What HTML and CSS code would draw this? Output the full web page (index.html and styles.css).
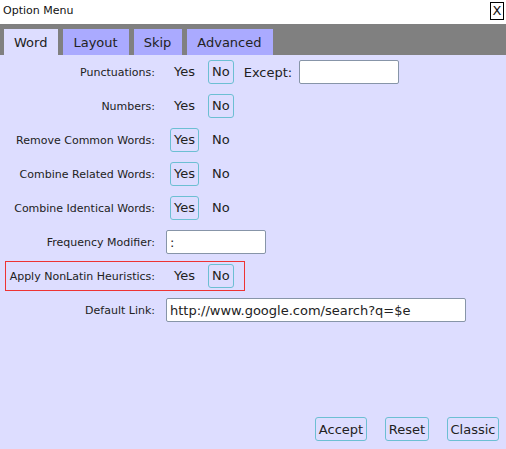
FILE: index.html
```html
<!DOCTYPE html>
<html>
<head>
<meta charset="utf-8">
<link rel="stylesheet" href="styles.css">
</head>
<body>
<div class="window">
  <div class="titlebar">
    <span class="title">Option Menu</span>
    <button class="close">X</button>
  </div>
  <div class="tabbar">
    <div class="tab active">Word</div>
    <div class="tab">Layout</div>
    <div class="tab">Skip</div>
    <div class="tab">Advanced</div>
  </div>
  <div class="content">
    <div class="form">
      <div class="row">
        <span class="label">Punctuations:</span>
        <div class="toggles">
          <span class="opt">Yes</span>
          <span class="opt sel">No</span>
        </div>
        <span class="extra">Except:</span>
        <input class="field short" type="text" value="">
      </div>
      <div class="row">
        <span class="label">Numbers:</span>
        <div class="toggles">
          <span class="opt">Yes</span>
          <span class="opt sel">No</span>
        </div>
      </div>
      <div class="row">
        <span class="label">Remove Common Words:</span>
        <div class="toggles">
          <span class="opt sel">Yes</span>
          <span class="opt">No</span>
        </div>
      </div>
      <div class="row">
        <span class="label">Combine Related Words:</span>
        <div class="toggles">
          <span class="opt sel">Yes</span>
          <span class="opt">No</span>
        </div>
      </div>
      <div class="row">
        <span class="label">Combine Identical Words:</span>
        <div class="toggles">
          <span class="opt sel">Yes</span>
          <span class="opt">No</span>
        </div>
      </div>
      <div class="row">
        <span class="label">Frequency Modifier:</span>
        <input class="field short" type="text" value=":">
      </div>
      <div class="row highlight">
        <span class="label">Apply NonLatin Heuristics:</span>
        <div class="toggles">
          <span class="opt">Yes</span>
          <span class="opt sel">No</span>
        </div>
      </div>
      <div class="row">
        <span class="label">Default Link:</span>
        <input class="field long" type="text" value="http://www.google.com/search?q=$e">
      </div>
    </div>
    <div class="actions">
      <button class="btn btn-accept">Accept</button>
      <button class="btn btn-reset">Reset</button>
      <button class="btn btn-classic">Classic</button>
    </div>
  </div>
</div>
</body>
</html>
```

FILE: styles.css
```css
html, body {
  margin: 0;
  padding: 0;
}

body {
  font-family: "DejaVu Sans", Verdana, sans-serif;
  color: #222;
  background: #ffffff;
}

.window {
  display: flex;
  flex-direction: column;
  height: 449px;
  width: 506px;
}

.titlebar {
  height: 24px;
  display: flex;
  justify-content: space-between;
  align-items: flex-start;
  padding: 0 2px 0 3px;
  box-sizing: border-box;
  background: #fff;
}

.title {
  font-size: 11px;
  line-height: 22px;
  color: #111;
}

.close {
  margin: 2px 0 0 0;
  width: 14px;
  height: 18px;
  padding: 0;
  border: 1px solid #000;
  background: #fff;
  font-family: inherit;
  font-size: 13px;
  line-height: 16px;
  color: #111;
}

.tabbar {
  height: 31px;
  background: #808080;
  display: flex;
  align-items: flex-end;
  gap: 5px;
  padding-left: 4px;
}

.tab {
  height: 26px;
  line-height: 27px;
  padding: 0 11px 0 10px;
  background: #aaaaff;
  font-size: 13px;
  color: #222;
}

.tab.active {
  background: #ddddff;
}

.content {
  flex: 1;
  background: #ddddff;
  display: flex;
  flex-direction: column;
  justify-content: space-between;
  padding: 5px 7px 8px 8px;
}

.form {
  display: flex;
  flex-direction: column;
  align-items: flex-start;
  gap: 10px;
}

.row {
  display: flex;
  align-items: center;
  height: 24px;
}

.row.highlight {
  border: 1px solid #ee3333;
  margin: -3px 0 -3px -3px;
  padding: 2px 10px 2px 2px;
}

.label {
  width: 147px;
  text-align: right;
  font-size: 11px;
  margin-right: 11px;
  white-space: nowrap;
}

.toggles {
  display: flex;
  gap: 9px;
  margin-left: 4px;
}

.opt {
  height: 24px;
  box-sizing: border-box;
  line-height: 22px;
  padding: 0 3px;
  border: 1px solid transparent;
  border-radius: 3px;
  font-size: 13px;
}

.opt.sel {
  border-color: #6cbfd3;
}

.extra {
  font-size: 13px;
  margin-left: 10px;
  margin-right: 7px;
}

.field {
  height: 24px;
  box-sizing: border-box;
  border: 1px solid #8795a8;
  border-radius: 2px;
  background: #fff;
  font-family: inherit;
  font-size: 13px;
  color: #222;
  padding: 0 3px;
  margin: 0;
}

.short {
  width: 100px;
}

.long {
  width: 300px;
}

.actions {
  display: flex;
  justify-content: flex-end;
  gap: 18px;
}

.btn {
  margin: 0;
  height: 24px;
  padding: 0;
  box-sizing: border-box;
  border: 1px solid #6cbfd3;
  border-radius: 3px;
  background: #ddddff;
  font-family: inherit;
  font-size: 13px;
  color: #222;
  text-align: center;
}

.btn-accept {
  width: 52px;
}

.btn-reset {
  width: 44px;
}

.btn-classic {
  width: 52px;
}
```
